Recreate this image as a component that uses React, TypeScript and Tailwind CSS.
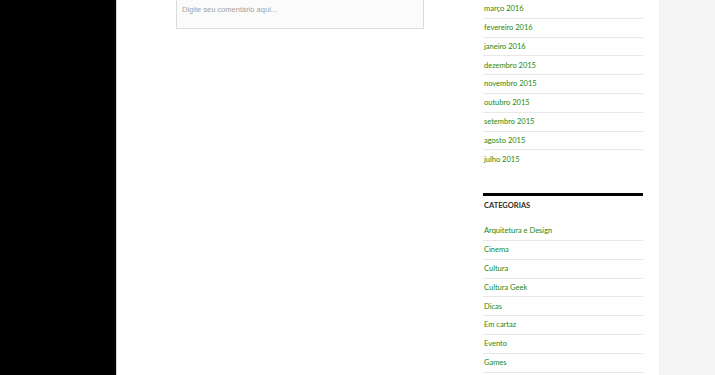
const archives = [
    'março 2016',
    'fevereiro 2016',
    'janeiro 2016',
    'dezembro 2015',
    'novembro 2015',
    'outubro 2015',
    'setembro 2015',
    'agosto 2015',
    'julho 2015',
];

const categories = [
    'Arquitetura e Design',
    'Cinema',
    'Cultura',
    'Cultura Geek',
    'Dicas',
    'Em cartaz',
    'Evento',
    'Games',
];

function LinkList({ items, more }: { items: string[]; more?: boolean }) {
    return (
        <ul className={`flex flex-col ${more ? 'border-b border-[#e8e8e8]' : ''}`}>
            {items.map((item, i) => (
                <li
                    key={item}
                    className={`flex h-[18.8px] items-center ${i > 0 ? 'border-t border-[#e8e8e8]' : ''}`}
                >
                    <a className="pl-px text-[7.5px] text-[#24890d]">{item}</a>
                </li>
            ))}
        </ul>
    );
}

export default function App() {
    return (
        <div
            className="flex h-[375px] w-[715px] overflow-hidden bg-white"
            style={{ fontFamily: 'Lato, "Noto Sans", sans-serif' }}
        >
            <div className="h-full w-[117px] shrink-0 border-r border-[#d6d6d6] bg-black" />
            <main className="flex h-full w-[542px] shrink-0 bg-white">
                <div className="ml-[59px] w-[248px] shrink-0">
                    <div className="-mt-[10px] h-[39px] border border-[#dcdcdc] bg-[#fbfbfb] px-[5px] pt-[14px] text-[7.5px] leading-[10px]">
                        <span
                            className="text-[#a3a3a3]"
                            style={{ fontFamily: '"Liberation Sans", Arial, sans-serif' }}
                        >
                            Digite seu comentário aqui...
                        </span>
                    </div>
                </div>
                <aside className="ml-[59px] w-[160px] shrink-0">
                    <div className="-mt-[1px]">
                        <LinkList items={archives} />
                    </div>
                    <div className="mt-[25px] h-[3px] bg-black" />
                    <h3 className="flex h-[18px] items-center pl-px text-[7.5px] font-bold uppercase text-[#2b2b2b]">
                        Categorias
                    </h3>
                    <div className="mt-[7px]">
                        <LinkList items={categories} more />
                    </div>
                </aside>
            </main>
            <div className="h-full flex-1 bg-[#f5f5f5]" />
        </div>
    );
}
